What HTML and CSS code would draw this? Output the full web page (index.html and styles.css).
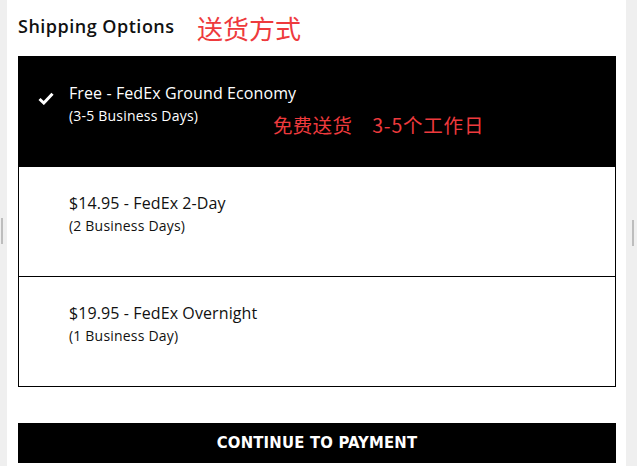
FILE: index.html
```html
<!DOCTYPE html>
<html lang="en">
<head>
    <meta charset="UTF-8">
    <title>Shipping Options</title>
    <link rel="stylesheet" href="styles.css">
</head>
<body>
    <span class="handle handle-left"></span>
    <span class="handle handle-right"></span>
    <div class="panel">
        <div class="heading">
            <h2 class="title">Shipping Options</h2>
            <span class="note note-title">送货方式</span>
        </div>

        <div class="options">
            <div class="option selected">
                <span class="check">
                    <svg width="16" height="13" viewBox="0 0 16 13"><path d="M1.5 7 L5.8 11 L14.5 1.8" fill="none" stroke="#fff" stroke-width="3" stroke-linejoin="miter"/></svg>
                </span>
                <div class="option-name">Free - FedEx Ground Economy</div>
                <div class="option-days">(3-5 Business Days)</div>
                <span class="note note-free">免费送货<span class="note-days">3-5个工作日</span></span>
            </div>
            <div class="option">
                <div class="option-name">$14.95 - FedEx 2-Day</div>
                <div class="option-days">(2 Business Days)</div>
            </div>
            <div class="option">
                <div class="option-name">$19.95 - FedEx Overnight</div>
                <div class="option-days">(1 Business Day)</div>
            </div>
        </div>

        <button class="continue">CONTINUE TO PAYMENT</button>
    </div>
</body>
</html>
```

FILE: styles.css
```css
html, body {
    margin: 0;
    height: 100%;
}
body {
    background: #efefef;
    font-family: "Open Sans", Arial, sans-serif;
    color: #111;
    position: relative;
    overflow: hidden;
}
.handle {
    position: absolute;
    width: 2px;
    height: 26px;
    background: #bdbdbd;
}
.handle-left {
    left: 1px;
    top: 218px;
}
.handle-right {
    left: 632px;
    top: 220px;
}
.panel {
    background: #fff;
    margin: 0 11px 0 7px;
    height: 100%;
    padding: 0 10px 0 11px;
    box-sizing: border-box;
}
.heading {
    display: flex;
    align-items: center;
    height: 56px;
    padding-bottom: 4px;
    box-sizing: border-box;
}
.title {
    margin: 0;
    font-size: 18px;
    font-weight: 600;
    letter-spacing: 0.5px;
    width: 179px;
}
.note {
    color: #ee3a3d;
    font-family: "Noto Sans CJK SC", "Open Sans", sans-serif;
}
.note-title {
    font-size: 26px;
    line-height: 1;
    margin-top: 4px;
}
.options {
    border: 1px solid #000;
    border-top: none;
}
.option {
    position: relative;
    height: 110px;
    box-sizing: border-box;
    padding: 26px 0 0 50px;
    border-top: 1px solid #000;
}
.option.selected {
    background: #000;
    color: #fff;
}
.option-name {
    font-size: 16px;
    line-height: 20px;
    letter-spacing: 0.1px;
}
.option-days {
    font-size: 14px;
    line-height: 20px;
    margin-top: 3px;
    letter-spacing: 0.2px;
}
.check {
    position: absolute;
    left: 19px;
    top: 31px;
}
.note-free {
    position: absolute;
    left: 254px;
    top: 55px;
    font-size: 19.5px;
    line-height: 26px;
    letter-spacing: 0.3px;
    white-space: nowrap;
}
.note-days {
    margin-left: 20px;
    letter-spacing: 0.8px;
}
.continue {
    display: block;
    width: 100%;
    height: 40px;
    margin-top: 36px;
    border: none;
    background: #000;
    color: #fff;
    font-family: "DejaVu Sans Condensed", "DejaVu Sans", sans-serif;
    font-stretch: condensed;
    font-weight: bold;
    font-size: 16.5px;
    letter-spacing: 0.2px;
    padding-bottom: 2px;
    cursor: pointer;
}
```
